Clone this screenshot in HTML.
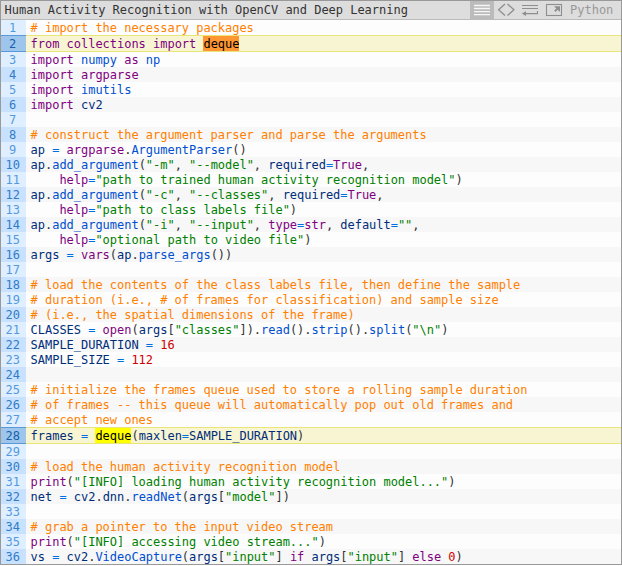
<!DOCTYPE html>
<html><head><meta charset="utf-8"><title>Human Activity Recognition</title>
<style>
html,body{margin:0;padding:0;background:#fff;}
body{width:622px;height:566px;overflow:hidden;font-family:"DejaVu Sans Mono","Liberation Mono",monospace;font-size:12px;}
#cr{position:absolute;left:0;top:0;width:620px;height:563px;border:1px solid #999;background:#fdfdfd;overflow:hidden;}
#tb{position:absolute;left:0;top:0;width:620px;height:18px;background:#ddd;border-bottom:1px solid #bbb;}
#ti{position:absolute;left:3.6px;letter-spacing:-0.024px;top:0;height:18px;line-height:18px;color:#333;font-size:12px;white-space:pre;}
#lang{position:absolute;left:569px;top:0;height:18px;line-height:18px;color:#999;font-size:12px;}
.btn{position:absolute;top:0;height:18px;width:24px;}
.btn.act{background:#bbb;}
.btn svg{position:absolute;left:0;top:0;}
#nums{position:absolute;left:0;top:19px;width:25px;background:#dfefff;color:#5499de;}
#code{position:absolute;left:25px;top:19px;width:595px;}
.n{height:15px;line-height:15px;text-align:center;padding:0 5.8px 0 4.2px;font-size:12px;}
.n.st{background:#c8e1ff;color:#317cc5;}
.n.mk{background:#9ec5ec;color:#1561ac;border-top:1px solid #5999d9;border-bottom:1px solid #5999d9;}
.l{height:15px;line-height:15px;padding-left:4.6px;white-space:pre;font-size:12px;color:#000;letter-spacing:-0.024px;}
.t{position:relative;top:1px;}
.hl{color:#000}
.hb{position:absolute;width:36px;height:15px;}
.l.st{background:#f7f7f7;}
.l.mk{background:#f8f5d3;border-top:1px solid #e9e579;border-bottom:1px solid #e9e579;}
.c{color:#ff8000}.k{color:#800080}.v{color:#002d7a}.e{color:#004ed0}.o{color:#006fe0}.sy{color:#333}.s{color:#008000}.cn{color:#ce0000}
.hb1{background:#ff9632;left:177px;top:16px}.hb2{background:#ffff00;left:69px;top:408px}
</style></head><body>
<div id="cr">
<div id="tb"><span id="ti">Human Activity Recognition with OpenCV and Deep Learning</span>
<svg id="ic" width="620" height="18" viewBox="1 1 620 18" style="position:absolute;left:0;top:0">
<rect x="470" y="1" width="24" height="18" fill="#bbb"/>
<g stroke="#f6f6f6" stroke-width="1.3"><path d="M474 5.5H490M474 8.5H490M474 11.6H490M474 14.6H490"/></g>
<g stroke="#8e8e8e" stroke-width="1.3" fill="none"><path d="M505 4L498.600 9.800L505 15.600M507.500 4L513.900 9.800L507.500 15.600"/></g>
<g stroke="#8e8e8e" stroke-width="1.1" fill="none"><path d="M522 5.500H538M522 8.500H538M525 13.600H537.500V11"/></g>
<path d="M521.800 13.600L526 11.300V15.900Z" fill="#8e8e8e"/>
<rect x="546.500" y="4.500" width="15" height="11" fill="none" stroke="#8e8e8e" stroke-width="1.1"/>
<path d="M554.900 11.200L558 8.100" stroke="#8e8e8e" stroke-width="2" fill="none"/>
<path d="M554 6.200H560V12Z" fill="#8e8e8e"/>
</svg>
<span id="lang">Python</span>
</div>
<div id="nums">
<div class="n "><span class="t">1</span></div>
<div class="n st mk"><span class="t">2</span></div>
<div class="n "><span class="t">3</span></div>
<div class="n st"><span class="t">4</span></div>
<div class="n "><span class="t">5</span></div>
<div class="n st"><span class="t">6</span></div>
<div class="n "><span class="t">7</span></div>
<div class="n st"><span class="t">8</span></div>
<div class="n "><span class="t">9</span></div>
<div class="n st"><span class="t">10</span></div>
<div class="n "><span class="t">11</span></div>
<div class="n st"><span class="t">12</span></div>
<div class="n "><span class="t">13</span></div>
<div class="n st"><span class="t">14</span></div>
<div class="n "><span class="t">15</span></div>
<div class="n st"><span class="t">16</span></div>
<div class="n "><span class="t">17</span></div>
<div class="n st"><span class="t">18</span></div>
<div class="n "><span class="t">19</span></div>
<div class="n st"><span class="t">20</span></div>
<div class="n "><span class="t">21</span></div>
<div class="n st"><span class="t">22</span></div>
<div class="n "><span class="t">23</span></div>
<div class="n st"><span class="t">24</span></div>
<div class="n "><span class="t">25</span></div>
<div class="n st"><span class="t">26</span></div>
<div class="n "><span class="t">27</span></div>
<div class="n st mk"><span class="t">28</span></div>
<div class="n "><span class="t">29</span></div>
<div class="n st"><span class="t">30</span></div>
<div class="n "><span class="t">31</span></div>
<div class="n st"><span class="t">32</span></div>
<div class="n "><span class="t">33</span></div>
<div class="n st"><span class="t">34</span></div>
<div class="n "><span class="t">35</span></div>
<div class="n st"><span class="t">36</span></div>
</div>
<div id="code">
<div class="hb hb1"></div><div class="hb hb2"></div>
<div class="l "><span class="t"><span class="c"># import the necessary packages</span></span></div>
<div class="l st mk"><span class="t"><span class="k">from</span> <span class="k">collections</span> <span class="k">import</span> <span class="hl">deque</span></span></div>
<div class="l "><span class="t"><span class="k">import</span> <span class="e">numpy</span> <span class="k">as</span> <span class="e">np</span></span></div>
<div class="l st"><span class="t"><span class="k">import</span> <span class="k">argparse</span></span></div>
<div class="l "><span class="t"><span class="k">import</span> <span class="e">imutils</span></span></div>
<div class="l st"><span class="t"><span class="k">import</span> <span class="v">cv2</span></span></div>
<div class="l "></div>
<div class="l st"><span class="t"><span class="c"># construct the argument parser and parse the arguments</span></span></div>
<div class="l "><span class="t"><span class="v">ap</span> <span class="o">=</span> <span class="k">argparse</span><span class="sy">.</span><span class="e">ArgumentParser</span><span class="sy">(</span><span class="sy">)</span></span></div>
<div class="l st"><span class="t"><span class="v">ap</span><span class="sy">.</span><span class="e">add_argument</span><span class="sy">(</span><span class="s">"-m"</span><span class="sy">,</span> <span class="s">"--model"</span><span class="sy">,</span> <span class="v">required</span><span class="o">=</span><span class="k">True</span><span class="sy">,</span></span></div>
<div class="l "><span class="t">    <span class="k">help</span><span class="o">=</span><span class="s">"path to trained human activity recognition model"</span><span class="sy">)</span></span></div>
<div class="l st"><span class="t"><span class="v">ap</span><span class="sy">.</span><span class="e">add_argument</span><span class="sy">(</span><span class="s">"-c"</span><span class="sy">,</span> <span class="s">"--classes"</span><span class="sy">,</span> <span class="v">required</span><span class="o">=</span><span class="k">True</span><span class="sy">,</span></span></div>
<div class="l "><span class="t">    <span class="k">help</span><span class="o">=</span><span class="s">"path to class labels file"</span><span class="sy">)</span></span></div>
<div class="l st"><span class="t"><span class="v">ap</span><span class="sy">.</span><span class="e">add_argument</span><span class="sy">(</span><span class="s">"-i"</span><span class="sy">,</span> <span class="s">"--input"</span><span class="sy">,</span> <span class="k">type</span><span class="o">=</span><span class="k">str</span><span class="sy">,</span> <span class="v">default</span><span class="o">=</span><span class="s">""</span><span class="sy">,</span></span></div>
<div class="l "><span class="t">    <span class="k">help</span><span class="o">=</span><span class="s">"optional path to video file"</span><span class="sy">)</span></span></div>
<div class="l st"><span class="t"><span class="v">args</span> <span class="o">=</span> <span class="k">vars</span><span class="sy">(</span><span class="v">ap</span><span class="sy">.</span><span class="e">parse_args</span><span class="sy">(</span><span class="sy">)</span><span class="sy">)</span></span></div>
<div class="l "></div>
<div class="l st"><span class="t"><span class="c"># load the contents of the class labels file, then define the sample</span></span></div>
<div class="l "><span class="t"><span class="c"># duration (i.e., # of frames for classification) and sample size</span></span></div>
<div class="l st"><span class="t"><span class="c"># (i.e., the spatial dimensions of the frame)</span></span></div>
<div class="l "><span class="t"><span class="v">CLASSES</span> <span class="o">=</span> <span class="k">open</span><span class="sy">(</span><span class="v">args</span><span class="sy">[</span><span class="s">"classes"</span><span class="sy">]</span><span class="sy">)</span><span class="sy">.</span><span class="e">read</span><span class="sy">(</span><span class="sy">)</span><span class="sy">.</span><span class="e">strip</span><span class="sy">(</span><span class="sy">)</span><span class="sy">.</span><span class="e">split</span><span class="sy">(</span><span class="s">"\n"</span><span class="sy">)</span></span></div>
<div class="l st"><span class="t"><span class="v">SAMPLE_DURATION</span> <span class="o">=</span> <span class="cn">16</span></span></div>
<div class="l "><span class="t"><span class="v">SAMPLE_SIZE</span> <span class="o">=</span> <span class="cn">112</span></span></div>
<div class="l st"></div>
<div class="l "><span class="t"><span class="c"># initialize the frames queue used to store a rolling sample duration</span></span></div>
<div class="l st"><span class="t"><span class="c"># of frames -- this queue will automatically pop out old frames and</span></span></div>
<div class="l "><span class="t"><span class="c"># accept new ones</span></span></div>
<div class="l st mk"><span class="t"><span class="v">frames</span> <span class="o">=</span> <span class="hl">deque</span><span class="sy">(</span><span class="v">maxlen</span><span class="o">=</span><span class="v">SAMPLE_DURATION</span><span class="sy">)</span></span></div>
<div class="l "></div>
<div class="l st"><span class="t"><span class="c"># load the human activity recognition model</span></span></div>
<div class="l "><span class="t"><span class="k">print</span><span class="sy">(</span><span class="s">"[INFO] loading human activity recognition model..."</span><span class="sy">)</span></span></div>
<div class="l st"><span class="t"><span class="v">net</span> <span class="o">=</span> <span class="v">cv2</span><span class="sy">.</span><span class="v">dnn</span><span class="sy">.</span><span class="e">readNet</span><span class="sy">(</span><span class="v">args</span><span class="sy">[</span><span class="s">"model"</span><span class="sy">]</span><span class="sy">)</span></span></div>
<div class="l "></div>
<div class="l st"><span class="t"><span class="c"># grab a pointer to the input video stream</span></span></div>
<div class="l "><span class="t"><span class="k">print</span><span class="sy">(</span><span class="s">"[INFO] accessing video stream..."</span><span class="sy">)</span></span></div>
<div class="l st"><span class="t"><span class="v">vs</span> <span class="o">=</span> <span class="v">cv2</span><span class="sy">.</span><span class="e">VideoCapture</span><span class="sy">(</span><span class="v">args</span><span class="sy">[</span><span class="s">"input"</span><span class="sy">]</span> <span class="k">if</span> <span class="v">args</span><span class="sy">[</span><span class="s">"input"</span><span class="sy">]</span> <span class="k">else</span> <span class="cn">0</span><span class="sy">)</span></span></div>
</div>
</div>
</body></html>
